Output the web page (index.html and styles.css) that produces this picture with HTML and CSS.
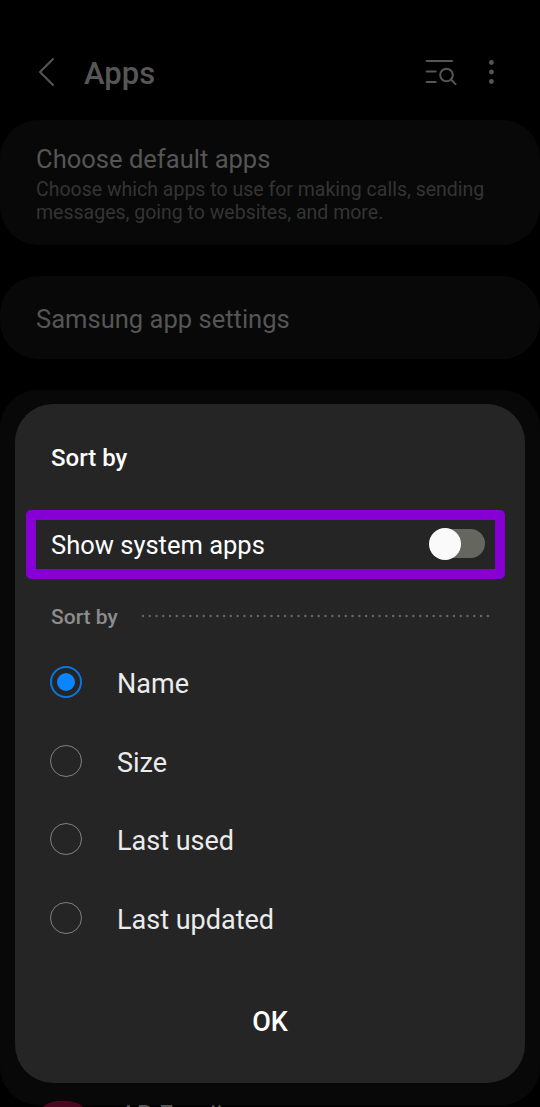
FILE: index.html
```html
<!DOCTYPE html>
<html lang="en">
<head>
<meta charset="utf-8">
<title>Apps</title>
<link rel="stylesheet" href="styles.css">
</head>
<body>
<div class="screen">
  <header class="topbar">
    <svg class="back" width="18" height="30" viewBox="0 0 18 30"><path d="M16 2 3 15l13 13"/></svg>
    <h1 class="title">Apps</h1>
    <svg class="search" width="34" height="28" viewBox="0 0 34 28"><path d="M2.7 3h25.5M2.7 13.5h9M2.7 24h9M27 21.5l4.6 4.6"/><circle cx="22.5" cy="17" r="6.3"/></svg>
    <svg class="more" width="6" height="26" viewBox="0 0 6 26"><circle cx="3.4" cy="3.5" r="2.4"/><circle cx="3.4" cy="13" r="2.4"/><circle cx="3.4" cy="22.5" r="2.4"/></svg>
  </header>
  <main class="cards">
    <section class="card card-default">
      <h2 class="label">Choose default apps</h2>
      <p class="hint">Choose which apps to use for making calls, sending<br>messages, going to websites, and more.</p>
    </section>
    <section class="card card-samsung"><h2 class="label">Samsung app settings</h2></section>
    <section class="card card-list">
      <div class="app"><span class="app-icon"></span><span class="app-name">AR Emoji</span></div>
    </section>
  </main>
  <div class="dialog" role="dialog">
    <h2 class="dialog-title">Sort by</h2>
    <div class="switch-row"><span class="switch-label">Show system apps</span><span class="switch"><span class="knob"></span></span></div>
    <div class="divider"><span class="divider-label">Sort by</span><svg class="dots" width="350" height="4"><path d="M2 2H348"/></svg></div>
    <ul class="options">
      <li class="option"><span class="radio checked"></span><span class="option-name">Name</span></li>
      <li class="option"><span class="radio"></span><span class="option-name">Size</span></li>
      <li class="option"><span class="radio"></span><span class="option-name">Last used</span></li>
      <li class="option"><span class="radio"></span><span class="option-name">Last updated</span></li>
    </ul>
    <button class="ok">OK</button>
  </div>
</div>
</body>
</html>
```
FILE: styles.css
```css
* { box-sizing: border-box; }
body { margin: 0; background: #000; font-family: Roboto, sans-serif; }
h1, h2, p, ul { margin: 0; padding: 0; }
.screen { position: relative; width: 540px; height: 1107px; overflow: hidden; }
.topbar { display: flex; align-items: center; height: 120px; padding: 24px 46px 0 37px; }
.title { margin: 3px auto 0 29px; font-size: 31px; font-weight: 500; line-height: 36px; color: #565656; }
.back, .search { fill: none; stroke: #565656; stroke-width: 2; stroke-linecap: round; stroke-linejoin: round; }
.search { margin-right: 30px; }
.more { fill: #565656; overflow: visible; }
.cards { display: flex; flex-direction: column; }
.card { background: #080808; border-radius: 38px; padding: 0 36px; }
.card-default { height: 125px; padding-top: 23px; margin-bottom: 31px; }
.card-samsung { display: flex; align-items: center; height: 83px; margin-bottom: 31px; padding-top: 3px; }
.card-list { display: flex; align-items: flex-end; height: 715px; }
.label { font-size: 25.55px; font-weight: 400; line-height: 32px; color: #555; }
.hint { font-size: 19.5px; line-height: 23px; color: #343434; margin-top: 3px; }
.app { display: flex; align-items: flex-start; height: 44px; margin-bottom: -40px; }
.app-icon { width: 54px; height: 44px; border-radius: 22px; background: #4b0720; }
.app-name { margin: -1px 0 0 30px; font-size: 25.55px; line-height: 30px; color: #555; }
.dialog { position: absolute; left: 15px; top: 404px; width: 510px; height: 679px; border-radius: 38px; background: #252525; padding: 39px 11px 0; display: flex; flex-direction: column; }
.dialog-title { margin-left: 25px; font-size: 24px; font-weight: 500; line-height: 30px; color: #fff; }
.switch-row { display: flex; align-items: center; justify-content: space-between; width: 479px; height: 69px; margin-top: 37px; padding: 0 11px 2px 15px; border: 10px solid #8600d6; border-radius: 5px; }
.switch-label { margin-top: 2px; font-size: 25.5px; line-height: 30px; color: #fff; }
.switch { display: flex; align-items: center; width: 55px; height: 29px; margin-right: -1px; border-radius: 15px; background: #666660; }
.knob { width: 32px; height: 32px; flex: none; border-radius: 50%; background: #fafafa; margin-left: -1px; }
.divider { display: flex; align-items: center; height: 30px; margin: 22px 0 0 25px; }
.divider-label { width: 90px; margin-top: 2px; font-size: 21px; font-weight: 500; line-height: 26px; color: #8d8d8d; }
.dots { fill: none; stroke: #636363; stroke-width: 2.6; stroke-linecap: round; stroke-dasharray: 0 6.76; }
.options { list-style: none; padding: 12px 0 0 24px; }
.option { display: flex; align-items: center; height: 78.5px; gap: 35px; font-size: 27px; line-height: 32px; color: #ebebeb; }
.option-name { margin-top: 4px; }
.radio { display: grid; place-items: center; width: 32px; height: 32px; border: 1.5px solid #808080; border-radius: 50%; }
.checked { border: 2px solid #0b75e0; }
.checked::before { content: ""; width: 18px; height: 18px; border-radius: 50%; background: #0a84ff; }
.ok { align-self: center; margin-top: 47px; padding: 0; border: 0; background: none; color: #fff; font: 500 27px/36px Roboto, sans-serif; }
```
